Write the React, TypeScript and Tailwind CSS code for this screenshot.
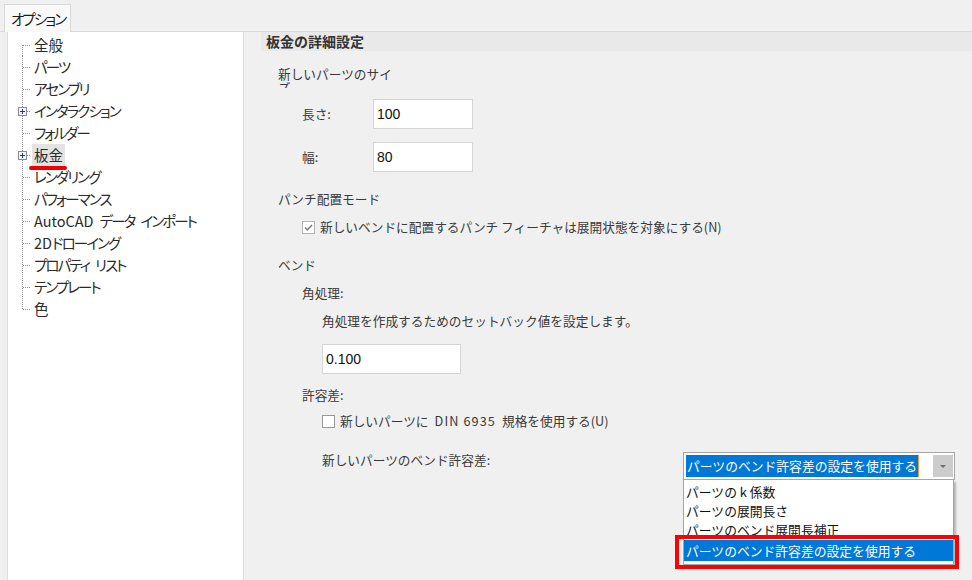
import React from "react";

const treeItems: { label: string; plus?: boolean; selected?: boolean }[] = [
  { label: "全般" },
  { label: "パーツ" },
  { label: "アセンブリ" },
  { label: "インタラクション", plus: true },
  { label: "フォルダー" },
  { label: "板金", plus: true, selected: true },
  { label: "レンダリング" },
  { label: "パフォーマンス" },
  { label: "AutoCAD データ インポート" },
  { label: "2Dドローイング" },
  { label: "プロパティ リスト" },
  { label: "テンプレート" },
  { label: "色" },
];

// Narrow the kana runs (proportional kana look), keep kanji full width
function Jp({ text }: { text: string }) {
  const parts = text.match(/[\u3040-\u30ff]+|\s+|[^\u3040-\u30ff\s]+/g) || [];
  return (
    <>
      {parts.map((p, i) =>
        /^\s+$/.test(p) ? (
          <span key={i} className="inline-block w-[6px]">
            {"\u00a0"}
          </span>
        ) : /[\u3040-\u30ff]/.test(p) ? (
          <span key={i} className="tracking-[-1.9px]">
            {p}
          </span>
        ) : (
          <span key={i}>{p}</span>
        )
      )}
    </>
  );
}

function Connector({ first, last, plus }: { first: boolean; last: boolean; plus?: boolean }) {
  return (
    <svg width="23" height="22" viewBox="0 0 23 22" className="shrink-0">
      <line
        x1="13.5"
        y1={first ? 11 : 0}
        x2="13.5"
        y2={last ? 11 : 22}
        stroke="#8f8f8f"
        strokeWidth="1"
        strokeDasharray="1 1"
      />
      <line x1={plus ? 18 : 14} y1="11.5" x2="22" y2="11.5" stroke="#8f8f8f" strokeWidth="1" strokeDasharray="1 1" />
      {plus && (
        <g>
          <rect x="9.5" y="7.5" width="8" height="8" fill="#f4f4f4" stroke="#8c8c8c" />
          <line x1="11" y1="11.5" x2="16" y2="11.5" stroke="#1f3c78" />
          <line x1="13.5" y1="9" x2="13.5" y2="14" stroke="#1f3c78" />
        </g>
      )}
    </svg>
  );
}

function CheckBox({ checked }: { checked?: boolean }) {
  return (
    <svg width="13" height="13" viewBox="0 0 13 13" className="shrink-0">
      <rect x="0.5" y="0.5" width="12" height="12" fill="#ffffff" stroke={checked ? "#b4b4b4" : "#9a9a9a"} />
      {checked && <path d="M3 6.5 L5.3 8.8 L10 4" fill="none" stroke="#808080" strokeWidth="1.6" />}
    </svg>
  );
}

function NumInput({ value, w }: { value: string; w: string }) {
  return (
    <div
      className={`${w} h-[30px] bg-white border border-[#d5d5d5] flex items-center pl-[3px] font-['Liberation_Sans',sans-serif] text-[14px] text-[#111]`}
    >
      {value}
    </div>
  );
}

export default function App() {
  return (
    <div className="w-[972px] h-[580px] bg-[#f0f0f0] overflow-hidden flex flex-col font-['Noto_Sans_CJK_JP',sans-serif] text-[#333]">
      {/* tab strip */}
      <div className="h-[32px] shrink-0 flex items-end pl-[4px] border-b border-[#d9d9d9]">
        <div className="w-[67px] h-[28px] -mb-px bg-[#f9f9f9] border border-b-0 border-[#d9d9d9] flex items-center pl-[6px] text-[14.5px] leading-[20px] text-[#1a1a1a] whitespace-nowrap [font-feature-settings:'palt']">
          <Jp text="オプション" />
        </div>
      </div>

      <div className="flex-1 flex pl-[7px]">
        {/* tree */}
        <div className="w-[237px] shrink-0 bg-white border-x border-[#dcdcdc] pt-[2px] pl-px">
          {treeItems.map((it, i) => (
            <div key={it.label} className="h-[22px] flex items-center">
              <Connector first={i === 0} last={i === treeItems.length - 1} plus={it.plus} />
              <span
                className={`relative h-[22px] flex items-center px-[2px] text-[14.5px] leading-[22px] text-[#2b2b2b] whitespace-nowrap [font-feature-settings:'palt'] ${
                  it.selected ? "bg-[#e3e3e3]" : ""
                }`}
              >
                <Jp text={it.label} />
                {it.selected && (
                  <span className="absolute left-[-3px] bottom-[-4px] w-[38px] h-[4px] rounded-full bg-[#f00000]" />
                )}
              </span>
            </div>
          ))}
        </div>

        {/* right panel */}
        <div className="flex-1 flex flex-col">
          <div className="ml-[17px] h-[19px] bg-[#e9e9e9] pl-[5px] text-[14px] leading-[19px] font-bold text-[#333]">
            板金の詳細設定
          </div>

          <div className="pl-[34px] flex flex-col text-[12.7px] leading-[18px] text-[#3a3a3a]">
            <div className="mt-[16px] w-[120px] h-[21px] overflow-hidden leading-[14px]">新しいパーツのサイズ</div>

            <div className="mt-[11px] pl-[24px] flex items-center">
              <span className="w-[71px]">長さ:</span>
              <NumInput value="100" w="w-[100px]" />
            </div>
            <div className="mt-[13px] pl-[24px] flex items-center">
              <span className="w-[71px]">幅:</span>
              <NumInput value="80" w="w-[100px]" />
            </div>

            <div className="mt-[18px]">パンチ配置モード</div>
            <div className="mt-[10px] pl-[24px] flex items-center gap-[5px]">
              <CheckBox checked />
              <span>新しいベンドに配置するパンチ フィーチャは展開状態を対象にする(N)</span>
            </div>

            <div className="mt-[20px]">ベンド</div>
            <div className="mt-[10px] pl-[24px]">角処理:</div>
            <div className="mt-[10px] pl-[44px]">角処理を作成するためのセットバック値を設定します。</div>
            <div className="mt-[14px] pl-[44px]">
              <NumInput value="0.100" w="w-[139px]" />
            </div>

            <div className="mt-[12px] pl-[24px]">許容差:</div>
            <div className="mt-[8px] pl-[44px] flex items-center gap-[5px]">
              <CheckBox />
              <span className="whitespace-nowrap">
                新しいパーツに
                <span className="inline-block px-[6px] tracking-[1.1px]">DIN 6935</span>
                規格を使用する(U)
              </span>
            </div>

            <div className="mt-[22px] pl-[44px] pr-[17px] flex items-start justify-between">
              <span className="mt-[-1px]">新しいパーツのベンド許容差:</span>

              {/* combo */}
              <div className="relative w-[272px] h-[28px] border border-[#a6a6a6] bg-white flex items-stretch pl-[2px] pt-[2px] pb-[2px] pr-px">
                <div className="flex-1">
                  <span className="inline-block h-[22px] bg-[#0078d7] text-white text-[12.8px] leading-[22px] pl-[1px] pr-[1px] border-r border-[#f59a3b]">
                    パーツのベンド許容差の設定を使用する
                  </span>
                </div>
                <div className="w-[20px] bg-[#cccccc] flex items-center justify-center">
                  <svg width="6" height="3" viewBox="0 0 6 3">
                    <path d="M0 0 H6 L3 3 Z" fill="#6e6e6e" />
                  </svg>
                </div>

                {/* dropdown list */}
                <div className="absolute left-[-1px] top-[27px] w-[271px] bg-white border-x border-b border-[#a6a6a6] shadow-[2px_2px_2px_rgba(0,0,0,0.25)] pt-[2px] pb-[3px] text-[12.8px] text-[#111]">
                  <div className="h-[19px] leading-[19px] pl-[2px]">パーツの k 係数</div>
                  <div className="h-[19px] leading-[19px] pl-[2px]">パーツの展開長さ</div>
                  <div className="h-[19px] leading-[19px] pl-[2px]">パーツのベンド展開長補正</div>
                  <div className="mt-px h-[21px] leading-[21px] pl-[2px] bg-[#0078d7] text-white">
                    パーツのベンド許容差の設定を使用する
                  </div>
                </div>

                {/* red highlight frame */}
                <div className="absolute left-[-9px] top-[82px] w-[284px] h-[34px] border-4 border-[#ff0000]" />
              </div>
            </div>
          </div>
        </div>
      </div>
    </div>
  );
}
